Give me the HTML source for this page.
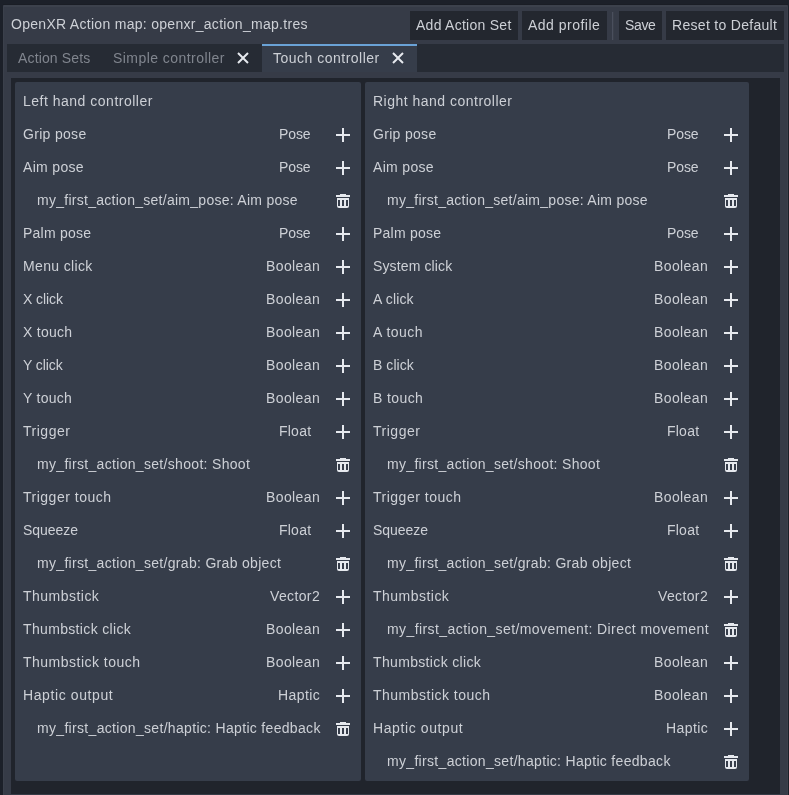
<!DOCTYPE html>
<html><head><meta charset="utf-8"><style>
html,body{margin:0;padding:0}
body{width:789px;height:795px;background:#1c2029;position:relative;overflow:hidden;font-family:"Liberation Sans",sans-serif;font-size:14px}
.win{position:absolute;left:3px;top:5px;width:785px;height:790px;background:#363b47;border:1px solid #3b404b;border-bottom:0;border-top:2px solid #3c414c;box-sizing:border-box;border-radius:1px 1px 0 0;box-shadow:0 -1px 0 #1a1d25}
.t{position:absolute;white-space:pre;line-height:20px;height:20px;color:#cdd0d6;will-change:transform}
.dim{color:#80858e}
.ic{position:absolute}
.btn{position:absolute;top:11px;height:29px;background:#23272f}
.sep{position:absolute;left:612px;top:12px;width:1px;height:28px;background:#4a4f5d;box-shadow:1px 0 0 #3b404b}
.tabbar{position:absolute;left:7px;top:44px;width:777px;height:28px;background:#262b34}
.tabactive{position:absolute;left:262px;top:44px;width:155px;height:28px;background:#363d4a;border-top:2px solid #6aa2d6;box-sizing:border-box}
.frame{position:absolute;left:11px;top:78px;width:769px;height:716px;background:#20242c}
.panel{position:absolute;top:82px;height:699px;background:#363d4a;border-radius:2px}
</style></head><body>
<div class="win"></div>
<div class="t" style="left:11.00px;top:14px;letter-spacing:0.291px">OpenXR Action map: openxr_action_map.tres</div>
<div class="btn" style="left:410px;width:108px"></div>
<div class="t" style="left:416.23px;top:15px;letter-spacing:0.265px">Add Action Set</div>
<div class="btn" style="left:522px;width:85px"></div>
<div class="t" style="left:528.34px;top:15px;letter-spacing:0.490px">Add profile</div>
<div class="btn" style="left:619px;width:43px"></div>
<div class="t" style="left:625.22px;top:15px;letter-spacing:-0.340px">Save</div>
<div class="btn" style="left:666px;width:118px"></div>
<div class="t" style="left:672.41px;top:15px;letter-spacing:0.299px">Reset to Default</div>
<div class="sep"></div>
<div class="tabbar"></div>
<div class="tabactive"></div>
<div class="t dim" style="left:17.50px;top:48px;letter-spacing:0.146px">Action Sets</div>
<div class="t dim" style="left:112.80px;top:48px;letter-spacing:0.450px">Simple controller</div>
<svg class="ic" style="left:235px;top:50px" width="16" height="16" viewBox="0 0 16 16"><path fill="#e6e9ee" d="M3.707 2.293 2.293 3.707 6.586 8l-4.293 4.293 1.414 1.414L8 9.414l4.293 4.293 1.414-1.414L9.414 8l4.293-4.293-1.414-1.414L8 6.586z"/></svg>
<div class="t" style="left:272.50px;top:48px;letter-spacing:0.493px">Touch controller</div>
<svg class="ic" style="left:390px;top:50px" width="16" height="16" viewBox="0 0 16 16"><path fill="#e6e9ee" d="M3.707 2.293 2.293 3.707 6.586 8l-4.293 4.293 1.414 1.414L8 9.414l4.293 4.293 1.414-1.414L9.414 8l4.293-4.293-1.414-1.414L8 6.586z"/></svg>
<div class="frame"></div>
<div class="panel" style="left:15px;width:346px"></div>
<div class="panel" style="left:365px;width:384px"></div>
<div class="t" style="left:23.00px;top:91px;letter-spacing:0.503px">Left hand controller</div>
<div class="t" style="left:23.00px;top:124px;letter-spacing:0.314px">Grip pose</div>
<div class="t" style="left:279.20px;top:124px;letter-spacing:-0.094px">Pose</div>
<svg class="ic" style="left:335px;top:127px" width="16" height="16" viewBox="0 0 16 16"><path fill="#e6e9ee" d="M7 1v6H1v2h6v6h2V9h6V7H9V1z"/></svg>
<div class="t" style="left:23.00px;top:157px;letter-spacing:0.328px">Aim pose</div>
<div class="t" style="left:279.20px;top:157px;letter-spacing:-0.094px">Pose</div>
<svg class="ic" style="left:335px;top:160px" width="16" height="16" viewBox="0 0 16 16"><path fill="#e6e9ee" d="M7 1v6H1v2h6v6h2V9h6V7H9V1z"/></svg>
<div class="t" style="left:37.00px;top:190px;letter-spacing:0.271px">my_first_action_set/aim_pose: Aim pose</div>
<svg class="ic" style="left:335px;top:193px" width="16" height="16" viewBox="0 0 16 16"><path fill="#e6e9ee" d="M5 1h6v1H5zM1 2h14v2H1zM2 5h12v8a2 2 0 0 1-2 2H4a2 2 0 0 1-2-2zM3 7v6h2V7zm4 0v6h2V7zm4 0v6h2V7z" fill-rule="evenodd"/></svg>
<div class="t" style="left:23.00px;top:223px;letter-spacing:0.245px">Palm pose</div>
<div class="t" style="left:279.20px;top:223px;letter-spacing:-0.094px">Pose</div>
<svg class="ic" style="left:335px;top:226px" width="16" height="16" viewBox="0 0 16 16"><path fill="#e6e9ee" d="M7 1v6H1v2h6v6h2V9h6V7H9V1z"/></svg>
<div class="t" style="left:23.00px;top:256px;letter-spacing:0.355px">Menu click</div>
<div class="t" style="left:266.14px;top:256px;letter-spacing:0.382px">Boolean</div>
<svg class="ic" style="left:335px;top:259px" width="16" height="16" viewBox="0 0 16 16"><path fill="#e6e9ee" d="M7 1v6H1v2h6v6h2V9h6V7H9V1z"/></svg>
<div class="t" style="left:23.00px;top:289px;letter-spacing:-0.067px">X click</div>
<div class="t" style="left:266.14px;top:289px;letter-spacing:0.382px">Boolean</div>
<svg class="ic" style="left:335px;top:292px" width="16" height="16" viewBox="0 0 16 16"><path fill="#e6e9ee" d="M7 1v6H1v2h6v6h2V9h6V7H9V1z"/></svg>
<div class="t" style="left:23.00px;top:322px;letter-spacing:0.275px">X touch</div>
<div class="t" style="left:266.14px;top:322px;letter-spacing:0.382px">Boolean</div>
<svg class="ic" style="left:335px;top:325px" width="16" height="16" viewBox="0 0 16 16"><path fill="#e6e9ee" d="M7 1v6H1v2h6v6h2V9h6V7H9V1z"/></svg>
<div class="t" style="left:23.00px;top:355px;letter-spacing:-0.069px">Y click</div>
<div class="t" style="left:266.14px;top:355px;letter-spacing:0.382px">Boolean</div>
<svg class="ic" style="left:335px;top:358px" width="16" height="16" viewBox="0 0 16 16"><path fill="#e6e9ee" d="M7 1v6H1v2h6v6h2V9h6V7H9V1z"/></svg>
<div class="t" style="left:23.00px;top:388px;letter-spacing:0.270px">Y touch</div>
<div class="t" style="left:266.14px;top:388px;letter-spacing:0.382px">Boolean</div>
<svg class="ic" style="left:335px;top:391px" width="16" height="16" viewBox="0 0 16 16"><path fill="#e6e9ee" d="M7 1v6H1v2h6v6h2V9h6V7H9V1z"/></svg>
<div class="t" style="left:23.00px;top:421px;letter-spacing:0.509px">Trigger</div>
<div class="t" style="left:278.70px;top:421px;letter-spacing:0.228px">Float</div>
<svg class="ic" style="left:335px;top:424px" width="16" height="16" viewBox="0 0 16 16"><path fill="#e6e9ee" d="M7 1v6H1v2h6v6h2V9h6V7H9V1z"/></svg>
<div class="t" style="left:37.00px;top:454px;letter-spacing:0.314px">my_first_action_set/shoot: Shoot</div>
<svg class="ic" style="left:335px;top:457px" width="16" height="16" viewBox="0 0 16 16"><path fill="#e6e9ee" d="M5 1h6v1H5zM1 2h14v2H1zM2 5h12v8a2 2 0 0 1-2 2H4a2 2 0 0 1-2-2zM3 7v6h2V7zm4 0v6h2V7zm4 0v6h2V7z" fill-rule="evenodd"/></svg>
<div class="t" style="left:23.00px;top:487px;letter-spacing:0.508px">Trigger touch</div>
<div class="t" style="left:266.14px;top:487px;letter-spacing:0.382px">Boolean</div>
<svg class="ic" style="left:335px;top:490px" width="16" height="16" viewBox="0 0 16 16"><path fill="#e6e9ee" d="M7 1v6H1v2h6v6h2V9h6V7H9V1z"/></svg>
<div class="t" style="left:23.00px;top:520px;letter-spacing:-0.029px">Squeeze</div>
<div class="t" style="left:278.70px;top:520px;letter-spacing:0.228px">Float</div>
<svg class="ic" style="left:335px;top:523px" width="16" height="16" viewBox="0 0 16 16"><path fill="#e6e9ee" d="M7 1v6H1v2h6v6h2V9h6V7H9V1z"/></svg>
<div class="t" style="left:37.00px;top:553px;letter-spacing:0.312px">my_first_action_set/grab: Grab object</div>
<svg class="ic" style="left:335px;top:556px" width="16" height="16" viewBox="0 0 16 16"><path fill="#e6e9ee" d="M5 1h6v1H5zM1 2h14v2H1zM2 5h12v8a2 2 0 0 1-2 2H4a2 2 0 0 1-2-2zM3 7v6h2V7zm4 0v6h2V7zm4 0v6h2V7z" fill-rule="evenodd"/></svg>
<div class="t" style="left:23.00px;top:586px;letter-spacing:0.478px">Thumbstick</div>
<div class="t" style="left:270.14px;top:586px;letter-spacing:0.368px">Vector2</div>
<svg class="ic" style="left:335px;top:589px" width="16" height="16" viewBox="0 0 16 16"><path fill="#e6e9ee" d="M7 1v6H1v2h6v6h2V9h6V7H9V1z"/></svg>
<div class="t" style="left:23.00px;top:619px;letter-spacing:0.341px">Thumbstick click</div>
<div class="t" style="left:266.14px;top:619px;letter-spacing:0.382px">Boolean</div>
<svg class="ic" style="left:335px;top:622px" width="16" height="16" viewBox="0 0 16 16"><path fill="#e6e9ee" d="M7 1v6H1v2h6v6h2V9h6V7H9V1z"/></svg>
<div class="t" style="left:23.00px;top:652px;letter-spacing:0.489px">Thumbstick touch</div>
<div class="t" style="left:266.14px;top:652px;letter-spacing:0.382px">Boolean</div>
<svg class="ic" style="left:335px;top:655px" width="16" height="16" viewBox="0 0 16 16"><path fill="#e6e9ee" d="M7 1v6H1v2h6v6h2V9h6V7H9V1z"/></svg>
<div class="t" style="left:23.00px;top:685px;letter-spacing:0.605px">Haptic output</div>
<div class="t" style="left:277.97px;top:685px;letter-spacing:0.424px">Haptic</div>
<svg class="ic" style="left:335px;top:688px" width="16" height="16" viewBox="0 0 16 16"><path fill="#e6e9ee" d="M7 1v6H1v2h6v6h2V9h6V7H9V1z"/></svg>
<div class="t" style="left:37.00px;top:718px;letter-spacing:0.318px">my_first_action_set/haptic: Haptic feedback</div>
<svg class="ic" style="left:335px;top:721px" width="16" height="16" viewBox="0 0 16 16"><path fill="#e6e9ee" d="M5 1h6v1H5zM1 2h14v2H1zM2 5h12v8a2 2 0 0 1-2 2H4a2 2 0 0 1-2-2zM3 7v6h2V7zm4 0v6h2V7zm4 0v6h2V7z" fill-rule="evenodd"/></svg>
<div class="t" style="left:373.00px;top:91px;letter-spacing:0.490px">Right hand controller</div>
<div class="t" style="left:373.00px;top:124px;letter-spacing:0.314px">Grip pose</div>
<div class="t" style="left:667.20px;top:124px;letter-spacing:-0.094px">Pose</div>
<svg class="ic" style="left:723px;top:127px" width="16" height="16" viewBox="0 0 16 16"><path fill="#e6e9ee" d="M7 1v6H1v2h6v6h2V9h6V7H9V1z"/></svg>
<div class="t" style="left:373.00px;top:157px;letter-spacing:0.328px">Aim pose</div>
<div class="t" style="left:667.20px;top:157px;letter-spacing:-0.094px">Pose</div>
<svg class="ic" style="left:723px;top:160px" width="16" height="16" viewBox="0 0 16 16"><path fill="#e6e9ee" d="M7 1v6H1v2h6v6h2V9h6V7H9V1z"/></svg>
<div class="t" style="left:387.00px;top:190px;letter-spacing:0.271px">my_first_action_set/aim_pose: Aim pose</div>
<svg class="ic" style="left:723px;top:193px" width="16" height="16" viewBox="0 0 16 16"><path fill="#e6e9ee" d="M5 1h6v1H5zM1 2h14v2H1zM2 5h12v8a2 2 0 0 1-2 2H4a2 2 0 0 1-2-2zM3 7v6h2V7zm4 0v6h2V7zm4 0v6h2V7z" fill-rule="evenodd"/></svg>
<div class="t" style="left:373.00px;top:223px;letter-spacing:0.245px">Palm pose</div>
<div class="t" style="left:667.20px;top:223px;letter-spacing:-0.094px">Pose</div>
<svg class="ic" style="left:723px;top:226px" width="16" height="16" viewBox="0 0 16 16"><path fill="#e6e9ee" d="M7 1v6H1v2h6v6h2V9h6V7H9V1z"/></svg>
<div class="t" style="left:373.00px;top:256px;letter-spacing:0.130px">System click</div>
<div class="t" style="left:654.14px;top:256px;letter-spacing:0.382px">Boolean</div>
<svg class="ic" style="left:723px;top:259px" width="16" height="16" viewBox="0 0 16 16"><path fill="#e6e9ee" d="M7 1v6H1v2h6v6h2V9h6V7H9V1z"/></svg>
<div class="t" style="left:373.00px;top:289px;letter-spacing:0.150px">A click</div>
<div class="t" style="left:654.14px;top:289px;letter-spacing:0.382px">Boolean</div>
<svg class="ic" style="left:723px;top:292px" width="16" height="16" viewBox="0 0 16 16"><path fill="#e6e9ee" d="M7 1v6H1v2h6v6h2V9h6V7H9V1z"/></svg>
<div class="t" style="left:373.00px;top:322px;letter-spacing:0.491px">A touch</div>
<div class="t" style="left:654.14px;top:322px;letter-spacing:0.382px">Boolean</div>
<svg class="ic" style="left:723px;top:325px" width="16" height="16" viewBox="0 0 16 16"><path fill="#e6e9ee" d="M7 1v6H1v2h6v6h2V9h6V7H9V1z"/></svg>
<div class="t" style="left:373.00px;top:355px;letter-spacing:0.062px">B click</div>
<div class="t" style="left:654.14px;top:355px;letter-spacing:0.382px">Boolean</div>
<svg class="ic" style="left:723px;top:358px" width="16" height="16" viewBox="0 0 16 16"><path fill="#e6e9ee" d="M7 1v6H1v2h6v6h2V9h6V7H9V1z"/></svg>
<div class="t" style="left:373.00px;top:388px;letter-spacing:0.402px">B touch</div>
<div class="t" style="left:654.14px;top:388px;letter-spacing:0.382px">Boolean</div>
<svg class="ic" style="left:723px;top:391px" width="16" height="16" viewBox="0 0 16 16"><path fill="#e6e9ee" d="M7 1v6H1v2h6v6h2V9h6V7H9V1z"/></svg>
<div class="t" style="left:373.00px;top:421px;letter-spacing:0.509px">Trigger</div>
<div class="t" style="left:666.70px;top:421px;letter-spacing:0.228px">Float</div>
<svg class="ic" style="left:723px;top:424px" width="16" height="16" viewBox="0 0 16 16"><path fill="#e6e9ee" d="M7 1v6H1v2h6v6h2V9h6V7H9V1z"/></svg>
<div class="t" style="left:387.00px;top:454px;letter-spacing:0.314px">my_first_action_set/shoot: Shoot</div>
<svg class="ic" style="left:723px;top:457px" width="16" height="16" viewBox="0 0 16 16"><path fill="#e6e9ee" d="M5 1h6v1H5zM1 2h14v2H1zM2 5h12v8a2 2 0 0 1-2 2H4a2 2 0 0 1-2-2zM3 7v6h2V7zm4 0v6h2V7zm4 0v6h2V7z" fill-rule="evenodd"/></svg>
<div class="t" style="left:373.00px;top:487px;letter-spacing:0.508px">Trigger touch</div>
<div class="t" style="left:654.14px;top:487px;letter-spacing:0.382px">Boolean</div>
<svg class="ic" style="left:723px;top:490px" width="16" height="16" viewBox="0 0 16 16"><path fill="#e6e9ee" d="M7 1v6H1v2h6v6h2V9h6V7H9V1z"/></svg>
<div class="t" style="left:373.00px;top:520px;letter-spacing:-0.029px">Squeeze</div>
<div class="t" style="left:666.70px;top:520px;letter-spacing:0.228px">Float</div>
<svg class="ic" style="left:723px;top:523px" width="16" height="16" viewBox="0 0 16 16"><path fill="#e6e9ee" d="M7 1v6H1v2h6v6h2V9h6V7H9V1z"/></svg>
<div class="t" style="left:387.00px;top:553px;letter-spacing:0.312px">my_first_action_set/grab: Grab object</div>
<svg class="ic" style="left:723px;top:556px" width="16" height="16" viewBox="0 0 16 16"><path fill="#e6e9ee" d="M5 1h6v1H5zM1 2h14v2H1zM2 5h12v8a2 2 0 0 1-2 2H4a2 2 0 0 1-2-2zM3 7v6h2V7zm4 0v6h2V7zm4 0v6h2V7z" fill-rule="evenodd"/></svg>
<div class="t" style="left:373.00px;top:586px;letter-spacing:0.478px">Thumbstick</div>
<div class="t" style="left:658.14px;top:586px;letter-spacing:0.368px">Vector2</div>
<svg class="ic" style="left:723px;top:589px" width="16" height="16" viewBox="0 0 16 16"><path fill="#e6e9ee" d="M7 1v6H1v2h6v6h2V9h6V7H9V1z"/></svg>
<div class="t" style="left:387.00px;top:619px;letter-spacing:0.414px">my_first_action_set/movement: Direct movement</div>
<svg class="ic" style="left:723px;top:622px" width="16" height="16" viewBox="0 0 16 16"><path fill="#e6e9ee" d="M5 1h6v1H5zM1 2h14v2H1zM2 5h12v8a2 2 0 0 1-2 2H4a2 2 0 0 1-2-2zM3 7v6h2V7zm4 0v6h2V7zm4 0v6h2V7z" fill-rule="evenodd"/></svg>
<div class="t" style="left:373.00px;top:652px;letter-spacing:0.341px">Thumbstick click</div>
<div class="t" style="left:654.14px;top:652px;letter-spacing:0.382px">Boolean</div>
<svg class="ic" style="left:723px;top:655px" width="16" height="16" viewBox="0 0 16 16"><path fill="#e6e9ee" d="M7 1v6H1v2h6v6h2V9h6V7H9V1z"/></svg>
<div class="t" style="left:373.00px;top:685px;letter-spacing:0.489px">Thumbstick touch</div>
<div class="t" style="left:654.14px;top:685px;letter-spacing:0.382px">Boolean</div>
<svg class="ic" style="left:723px;top:688px" width="16" height="16" viewBox="0 0 16 16"><path fill="#e6e9ee" d="M7 1v6H1v2h6v6h2V9h6V7H9V1z"/></svg>
<div class="t" style="left:373.00px;top:718px;letter-spacing:0.605px">Haptic output</div>
<div class="t" style="left:665.97px;top:718px;letter-spacing:0.424px">Haptic</div>
<svg class="ic" style="left:723px;top:721px" width="16" height="16" viewBox="0 0 16 16"><path fill="#e6e9ee" d="M7 1v6H1v2h6v6h2V9h6V7H9V1z"/></svg>
<div class="t" style="left:387.00px;top:751px;letter-spacing:0.318px">my_first_action_set/haptic: Haptic feedback</div>
<svg class="ic" style="left:723px;top:754px" width="16" height="16" viewBox="0 0 16 16"><path fill="#e6e9ee" d="M5 1h6v1H5zM1 2h14v2H1zM2 5h12v8a2 2 0 0 1-2 2H4a2 2 0 0 1-2-2zM3 7v6h2V7zm4 0v6h2V7zm4 0v6h2V7z" fill-rule="evenodd"/></svg>
</body></html>
